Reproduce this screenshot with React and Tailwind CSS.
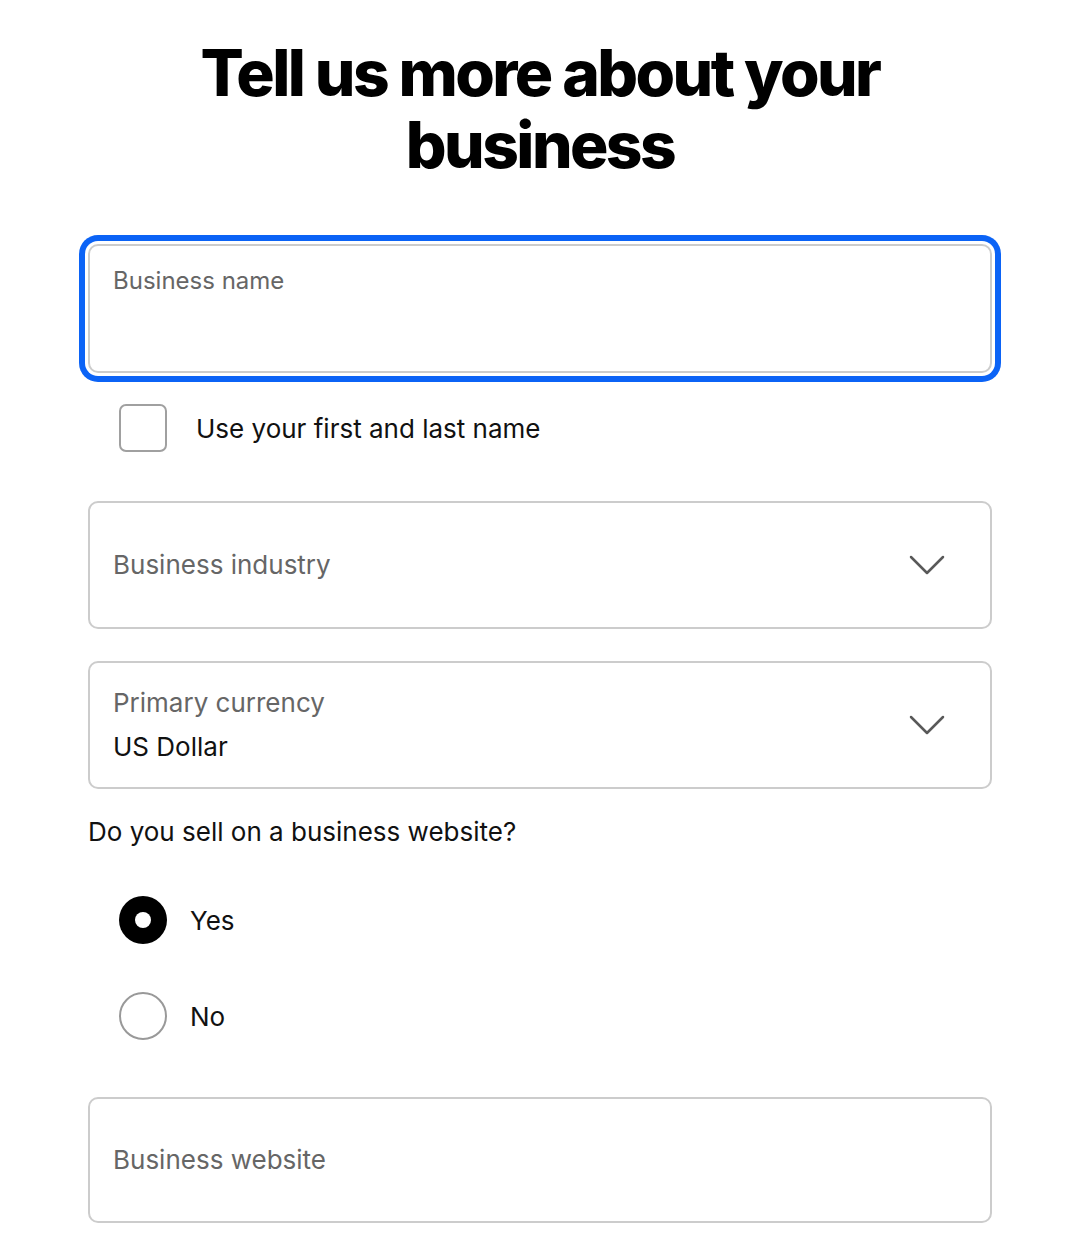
import React from 'react';

const font = { fontFamily: 'Inter, "Noto Sans", sans-serif' };

const Chevron = () => (
  <svg width="36" height="22" viewBox="0 0 36 22" fill="none" className="shrink-0">
    <path d="M2 3 L18 19 L34 3" stroke="#595959" strokeWidth="2.5" strokeLinecap="round" strokeLinejoin="round" />
  </svg>
);

const SelectBox = ({ label, value }) => (
  <div className="h-[128px] rounded-[10px] border-2 border-[#cccccc] bg-white flex items-center justify-between pl-[23px] pr-[45px]">
    {value ? (
      <div className="flex flex-col">
        <span className="text-[26px] leading-[34px] text-[#666666]">{label}</span>
        <span className="text-[26px] leading-[34px] mt-[10px] text-[#111111]">{value}</span>
      </div>
    ) : (
      <span className="text-[26px] leading-[34px] text-[#666666]">{label}</span>
    )}
    <Chevron />
  </div>
);

const Radio = ({ checked, label }) => (
  <div className="flex items-center h-[48px] pl-[31px]">
    {checked ? (
      <span className="w-[48px] h-[48px] rounded-full bg-black flex items-center justify-center">
        <span className="w-[16px] h-[16px] rounded-full bg-white" />
      </span>
    ) : (
      <span className="w-[48px] h-[48px] rounded-full border-2 border-[#999999] bg-white" />
    )}
    <span className="ml-[23px] text-[26px] text-[#111111]">{label}</span>
  </div>
);

export default function App() {
  return (
    <div className="bg-white text-[#111111] overflow-hidden" style={font}>
      <div className="pl-[88px] pr-[82px] pt-[37px] pb-[20px]">
        <h1 className="text-center text-[64px] leading-[72px] font-extrabold tracking-[-0.04em] text-black">
          Tell us more about your
          <br />
          business
        </h1>

        <div className="mt-[63px] h-[129px] rounded-[10px] border-2 border-[#cccccc] bg-white ring-[6px] ring-[#0b63f6] ring-offset-[3px] pl-[23px] pt-[19px]">
          <span className="text-[24px] leading-[32px] text-[#666666]">Business name</span>
        </div>

        <div className="mt-[31px] flex items-center pl-[31px]">
          <span className="w-[48px] h-[48px] rounded-[7px] border-2 border-[#a0a0a0] bg-white" />
          <span className="ml-[29px] text-[26px] text-[#111111]">Use your first and last name</span>
        </div>

        <div className="mt-[49px]">
          <SelectBox label="Business industry" />
        </div>

        <div className="mt-[32px]">
          <SelectBox label="Primary currency" value="US Dollar" />
        </div>

        <p className="mt-[26px] text-[26px] leading-[34px] text-[#111111]">Do you sell on a business website?</p>

        <div className="mt-[47px]">
          <Radio checked label="Yes" />
        </div>
        <div className="mt-[48px]">
          <Radio label="No" />
        </div>

        <div className="mt-[57px] h-[126px] rounded-[10px] border-2 border-[#cccccc] bg-white flex items-center pl-[23px]">
          <span className="text-[26px] leading-[34px] text-[#666666]">Business website</span>
        </div>
      </div>
    </div>
  );
}
